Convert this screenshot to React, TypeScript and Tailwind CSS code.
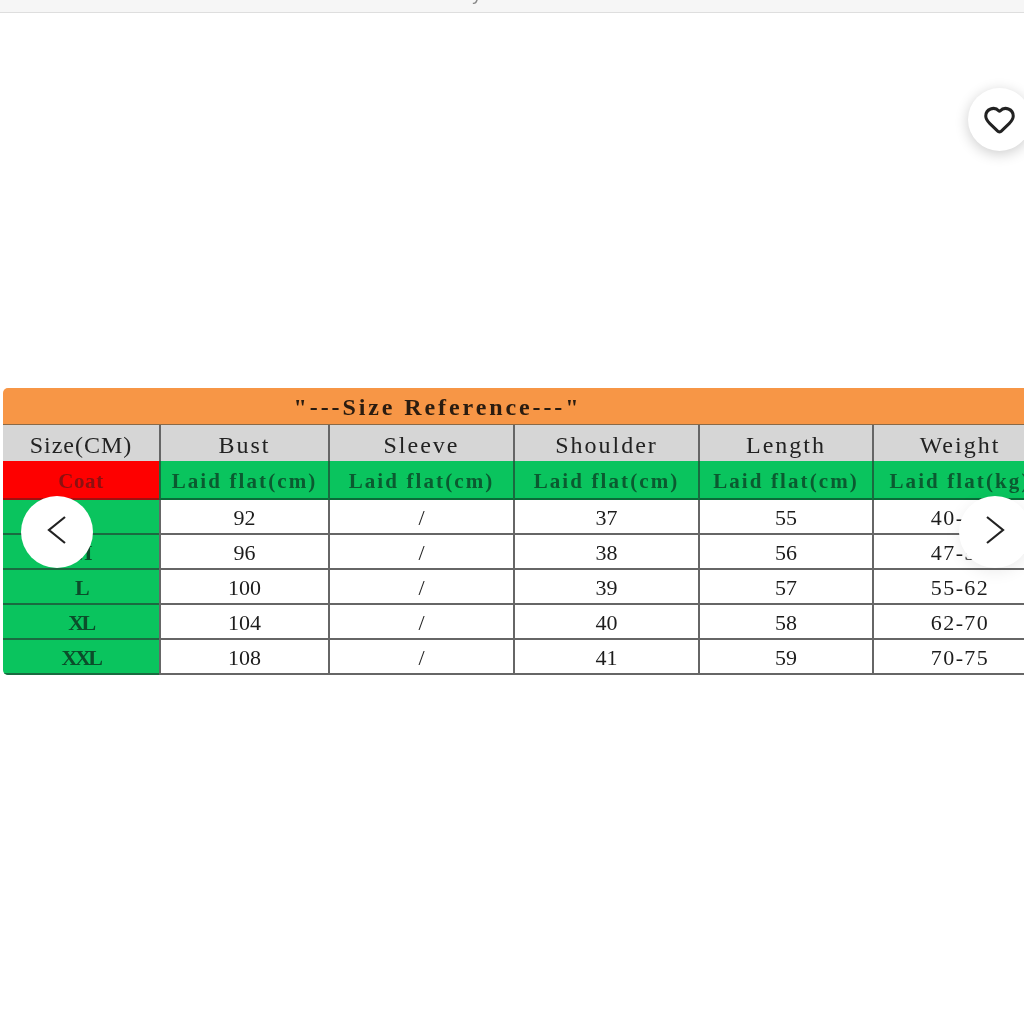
import React from "react";
import { Heart } from "lucide-react";

const columns = ["Size(CM)", "Bust", "Sleeve", "Shoulder", "Length", "Weight"];
const units = ["Coat", "Laid flat(cm)", "Laid flat(cm)", "Laid flat(cm)", "Laid flat(cm)", "Laid flat(kg)"];
const rows = [
  ["S", "92", "/", "37", "55", "40-47"],
  ["M", "96", "/", "38", "56", "47-55"],
  ["L", "100", "/", "39", "57", "55-62"],
  ["XL", "104", "/", "40", "58", "62-70"],
  ["XXL", "108", "/", "41", "59", "70-75"],
];

export default function App() {
  return (
    <div className="relative h-[1024px] w-full overflow-hidden bg-white font-['Liberation_Serif',serif] text-[#222]">
      {/* browser bar, cut off at the top */}
      <div className="h-[13px] overflow-hidden border-b border-[#dedede] bg-[#f6f6f6] pl-[433px]">
        <span className="-mt-[16px] block font-['Liberation_Sans',sans-serif] text-[18.6px] leading-[20px] text-[#888] blur-[0.5px]">
          E-bay.com
        </span>
      </div>

      <div className="pl-[3px] pt-[375px]">
        <div className="w-[1021px] overflow-hidden rounded-l-[5px] blur-[0.5px]">
          <div className="grid grid-cols-[156px_169px_185px_185px_174px_174px]">
            {/* title */}
            <div className="col-span-5 flex h-[37px] items-center justify-center whitespace-nowrap border-b border-[#8a6a48] bg-[#f79646] pt-[2px] text-[24px] font-bold leading-none tracking-[2.9px] text-[#2a1c10]">
              "---Size Reference---"
            </div>
            <div className="h-[37px] border-b border-[#8a6a48] bg-[#f79646]" />

            {/* column names */}
            {columns.map((name, i) => (
              <div
                key={name}
                className={`flex h-[36px] items-center justify-center whitespace-nowrap bg-[#d6d6d6] pt-[4px] text-[24px] leading-none text-[#222] ${
                  i > 0 ? "border-l-2 border-[#666] tracking-[2px]" : "tracking-[1px]"
                }`}
              >
                {name}
              </div>
            ))}

            {/* units */}
            {units.map((unit, i) => (
              <div
                key={i}
                className={`flex h-[39px] items-center overflow-hidden whitespace-nowrap border-b-2 pt-[4px] text-[21px] font-bold leading-none ${
                  i === 0
                    ? "justify-center border-[#a01010] bg-[#fe0000] tracking-[0.6px] text-[#8c1010]"
                    : "justify-center border-b-[#0b6b38] border-l-2 border-l-[#1a6b40] bg-[#0ac45e] tracking-[2.1px] text-[#0b5a30]"
                }`}
              >
                <span className="shrink-0">{unit}</span>
              </div>
            ))}

            {/* sizes */}
            {rows.map((row, r) =>
              row.map((cell, i) => (
                <div
                  key={`${r}-${i}`}
                  className={`flex h-[35px] items-center justify-center pt-[3px] text-[22px] leading-none ${
                    i === 0
                      ? "border-b-2 border-[#1a6b40] bg-[#0ac45e] text-[20px] font-bold tracking-[-2.5px] text-[#0b4d2a]"
                      : `border-b-2 border-l-2 border-[#666] bg-white text-[#1c1c1c] ${i === 5 ? "tracking-[1.4px]" : ""}`
                  }`}
                >
                  {cell}
                </div>
              ))
            )}
          </div>
        </div>
      </div>

      {/* carousel controls */}
      <button className="absolute left-[21px] top-[496px] flex h-[72px] w-[72px] items-center justify-center rounded-full bg-white">
        <svg width="20" height="30" viewBox="0 0 20 30" fill="none" stroke="#222" strokeWidth="2.2" className="-mt-[4px]">
          <path d="M18 2 L2 15 L18 28" />
        </svg>
      </button>
      <button className="absolute left-[959px] top-[496px] flex h-[72px] w-[72px] items-center justify-center rounded-full bg-white shadow-[0_4px_16px_rgba(0,0,0,0.08)]">
        <svg width="20" height="30" viewBox="0 0 20 30" fill="none" stroke="#222" strokeWidth="2.2" className="-mt-[4px]">
          <path d="M2 2 L18 15 L2 28" />
        </svg>
      </button>
      <button className="absolute left-[968px] top-[88px] flex h-[63px] w-[63px] items-center justify-center rounded-full bg-white shadow-[0_3px_14px_rgba(0,0,0,0.2)]">
        <Heart size={33} strokeWidth={2.2} className="text-[#222]" />
      </button>
    </div>
  );
}
